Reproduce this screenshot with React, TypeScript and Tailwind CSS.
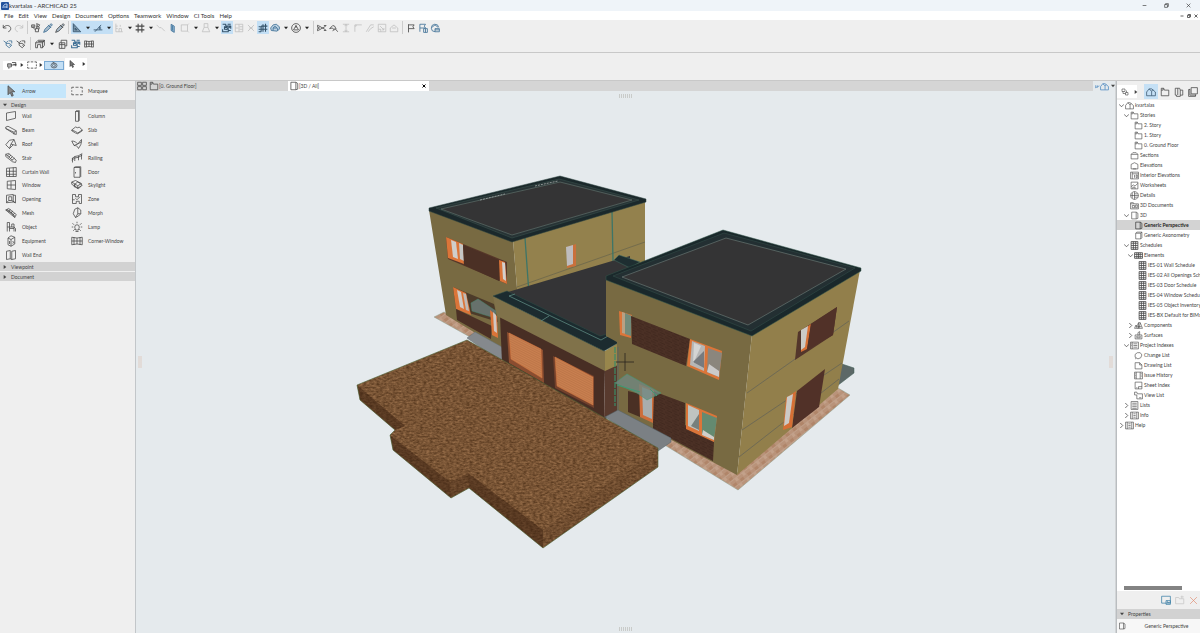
import React from "react";

/* Icon outlines on a 16 x 16 grid */
const paths: Record<string, string> = {
  arrow: "M4 1v12l3-3 2 5 2-1-2-5h4z",
  marquee: "M1 3h3M6 3h4M12 3h3v2M15 7v3M15 12v1h-3M10 13H6M4 13H1v-2M1 9V7M1 5V3",
  wall: "M2 4l12-2v9L2 14z",
  column: "M6 2l1-1h4v13l-1 1H6zM6 2h4v13M10 2l1-1",
  beam: "M1 4l3-1 11 6v5l-3-1L1 6zM1 6l11 5 3-2M12 11v3",
  slab: "M1 8l5-4 3 1 2-1 4 4-6 4-3-2zM1 8v1l5 3 3 1 6-4V8",
  roof: "M1 9l5-6 6-1 3 8-4-1-5 5zM6 14l2-6 4-6M8 8l3 1",
  shell: "M1 4c4 0 6 2 8 4l5-6v3l-1 4-3 5c-1-3-3-4-6-4zM9 8l-5 2M14 5l-5 3",
  stair: "M1 3l4-1 10 9-1 3-4-1L1 6zM1 3l9 8M3 5l3-2M5 7l3-3M7 9l3-3M9 11l4-3",
  railing: "M1 9l4-3 5-1 5-3M1 11l4-3 5-1 5-3M2 8v6M5 6v6M10 5v6M14 3v7",
  curtain: "M2 3l13-1v12H2zM6 3v11M11 2v12M2 7h13M2 11h13",
  door: "M4 2h8v13H4zM6 8v2M4 2l2-1h7v13l-1 1",
  window: "M3 3l11-1v12l-11-1zM8 3v10M3 8h11",
  skylight: "M1 4l5-2 8 4-5 3zM1 4v3l8 5 5-3M5 7l4-3 6 4-5 5-6-3zM9 9v4M5 7v3",
  opening: "M2 3l9-1v10l-9 1zM5 5h4v5H5zM11 3h3v10l-3-1M5 10l-3 3M9 10l5 3",
  zone: "M2 2h4v3h4V2h4v12h-3v-3H7v3H2zM6 7l2 2 4-4M2 9h3",
  mesh: "M1 4l4-2 10 8-2 4zM3 3l10 9M1 4c3 0 4 3 6 3s4 3 6 7M7 3L5 7M10 5L8 9M13 8l-3 3",
  morph: "M6 14L3 9l2-6 4-2 4 3v5l-3 3zM9 1v8l-3 5M9 9l4 0",
  object: "M3 14V2h3v6h6v6M3 8h3M6 8v6M6 10l6 0M12 8l2 2v4M9 8V4h3v4",
  lamp: "M5 8a3 3 0 1 1 6 0c0 2-1 2-1 4H6c0-2-1-2-1-4zM8 1v2M2 3l2 2M14 3l-2 2M1 8h2M13 8h2M3 13l2-2M13 13l-2-2M6 14h4",
  equipment: "M4 4l4-3 5 2v9l-5 3-4-2zM4 4l4 2 5-3M8 6v9M6 8v4M10 8l2 2M10 11l2-1",
  corner: "M1 3l7 1 7-1v10l-7-1-7 1zM8 4v8M4 3v10M12 3v10M1 8h14",
  wallend: "M2 3l5-1v11l-5 1zM9 3l5-1v11l-5 1zM7 13l2 1",
  home: "M1 14V8l4-5 4 4v7zM5 3h4l6 5v6H9M9 7l2-3",
  folder: "M2 2h4l1 3h7v9H2zM2 5h3V2",
  section: "M2 6l3-3h6l3 3v8H2zM2 6h12",
  elevation: "M2 6l6-3 6 3v8H2zM5 14h6",
  interior: "M1 2h14v12H1zM4 2v12M4 5h11M8 7v5M11 7h2v5h-2z",
  worksheet: "M2 2h12v12H2zM2 10l4-3 3 2 5-5M5 14v-3h4v3",
  details: "M8 1a7 7 0 1 0 .1 0M8 1v14M1 8h14M8 5h6M8 11h6M4 3v10",
  doc3d: "M1 3h5l1 2h8v9H1zM4 8h4v4H4zM10 7h3v5h-3zM1 5h6",
  box: "M3 2h8v12H3zM11 2l3 2v9l-3 1",
  axon: "M3 4l2-2h9v10l-2 2H3zM3 4h9v10M12 4l2-2",
  table: "M2 1h12v14H2zM6 1v14M10 1v14M2 4h12M2 8h12M2 12h12",
  elements: "M1 3h14v10H1zM1 6h14M1 10h14M5 3v10M8 3v10M11 3v10",
  components: "M1 13l2-5 3 0 2-5 3 0 4 10zM3 8l3 5M8 3v10M11 3l-2 10M4 10h9",
  surface: "M2 7h12v7H2zM7 7V3l3-2v6M5 9h6v3H5z",
  index: "M1 2h14v12H1zM4 2v12M6 5h7M6 8h7M6 11h7M2 5h1M2 8h1",
  change: "M6 3l5 0 3 4-2 5-5 2-5-3 0-5zM4 13l-2 1",
  drawing: "M2 3h8l4 4v7H2zM10 3v4h4",
  issue: "M1 2h14v12H1zM4 2v12M2 5h1M2 8h1M2 11h1M12 5h2M12 9h2M11 2v12",
  sheet: "M2 2h12v12H2zM8 10h6M8 10v4M4 12h2",
  view: "M1 2h4l1 3h9v9H5V7H1zM9 12h4",
  list: "M2 1h12v14H2zM4 4h8M4 7h8M4 10h8M4 13h8",
  info: "M1 2h14v12H1zM4 2v12M12 2v12M6 5h4M6 8h4M6 11h4",
  undo: "M2 3v5h5M2 8c3-6 12-5 12 1 0 3-2 4-4 5",
  redo: "M14 3v5H9M14 8C11 2 2 3 2 9c0 3 2 4 4 5",
  param: "M1 3h5v4H1zM3 7l4 4M7 9h5v5H7zM9 1l5 2-3 4zM9 4v5M13 6v4M2 5h3",
  dropper: "M1 15l2-5 6-6 3 3-6 6zM8 3l5 5M10 4l3-3 2 2-3 3",
  triangle: "M2 14V1l12 13zM5 11V8l3 3zM2 5h2M2 8h1",
  guide: "M1 11h14M3 14L13 3M9 8h4M11 5v6",
  ruler: "M3 1v13h11M3 5h3M3 9h3M8 14v-5h4v5M10 6V3",
  grid: "M5 1v14M11 1v14M1 5h14M1 11h14",
  wave: "M1 3l5 5 2-1 6 6",
  plane: "M5 2l5 3v10l-5-3zM7 4v8",
  square: "M2 3h10v10H2zM12 3l2-2M12 13l2 2",
  pin: "M5 1h6v6l3 7H2l3-7zM5 7h6",
  suspend: "M1 2h5v3h8v4M4 5v5h6v4H1v-4M9 2h5M6 11l7-5M10 12h4M4 7h5",
  split: "M2 2h12v12H2zM8 2v12M2 8h5M9 6h5M9 10h5",
  cross: "M3 3l10 10M13 3L3 13M5 8h6",
  marqueeHash: "M1 6h4v8M8 2v12M12 1v13M1 10h14M5 5h10M1 14h4",
  cloud: "M2 12l-1-4 4-5 5-1 5 4v4l-4 3zM5 12V8l3-3 4 4v3M5 8h6",
  circleTri: "M8 1a7 7 0 1 0 .1 0M8 4l4 7H4zM8 4v4",
  scissors: "M2 4l12 7M2 12l12-7M1 3v4h3M1 13V9h3M11 4h4M11 12h4",
  adjust: "M1 9l5-5 3 1 2 4-2 2-4-3zM9 8l5 6M8 10l-2 3",
  dim: "M3 2h10M3 14h10M8 2v12M6 5l2-3 2 3M6 11l2 3 2-3",
  fillet: "M3 14V3h11M5 3v2H3",
  chamfer: "M2 14L9 3h5M5 14l4-5 5-3",
  resize: "M2 2h12v12H2zM5 5l6 6M8 11h3V8M2 10h4v4",
  hood: "M2 14V8l6-5 6 5v6zM5 8h6",
  flag: "M4 15V2M4 3h9l-2 3 2 3H4",
  flagBox: "M3 14V2h9l-2 3 2 3H3M9 9h6v6H9zM12 9v6",
  roundHome: "M14 7a6 6 0 1 0-6 7M3 7l5-4 5 4M8 9h7v5H8zM8 11h7",
  team: "M1 3l4 3 3-3M5 6v4l5 4 4-4-4-3H5M9 3h5v4M10 10h2",
  layers: "M1 6l4-4h10l-3 4zM1 6v8h3V9h5v5h3V6M12 6l3-4v8l-3 4M5 4h8",
  tools: "M2 6h9v9H2zM5 6V2h9v9h-3M2 9h9M6 6v9",
  sheets: "M5 1h10v10H5zM3 4H1v11h11v-3M3 3v10h10",
  layout: "M2 2h7l1 3h4v8h-4v2H4v-2H2zM6 2v11M10 5v8",
  eye: "M2 9a6 5 0 1 1 12 0 6 5 0 1 1-12 0M8 6a3 3 0 1 0 .1 0M5 2l4 2M8 9h1",
  chooser: "M2 2h6v5H2zM9 9h5v5H9zM4 7v4h5M11 5v4",
  tiles: "M1 2h6v5H1zM9 2h6v5H9zM1 9h6v5H1zM9 9h6v5H9z",
  linked: "M1 4v8M1 12l13-6M7 4v8",
  method: "M1 6h6v5H1zM3 11v3M8 4h6v6M10 7h5M1 8h14",
  save: "M1 2h14v11H1zM8 9h7v6H8zM10 9v3h4",
  newFolder: "M1 4h5l1 2h7v8H1zM11 1v5M9 3h5",
  x: "M2 2l12 12M14 2L2 14",
  restore: "M2 5h9v9H2zM5 5V2h9v9h-3",
  minus: "M2 8h12",
};

type IconProps = { name: string; className?: string; fill?: string; thick?: number };
function Icon({ name, className = "size-[10px]", fill = "none", thick = 1.2 }: IconProps) {
  return (
    <svg viewBox="0 0 16 16" aria-hidden="true" className={`shrink-0 ${className}`} fill={fill} stroke="currentColor" strokeWidth={thick} strokeLinejoin="round">
      <path d={paths[name]} />
    </svg>
  );
}

function Caret({ right = false }: { right?: boolean }) {
  return (
    <svg viewBox="0 0 6 6" aria-hidden="true" className="size-[4px] shrink-0" fill="currentColor">
      <path d={right ? "M1 0l4 3-4 3z" : "M0 1h6L3 5z"} />
    </svg>
  );
}

const Sep = () => (
  <span className="flex w-[5px] justify-center">
    <span className="h-[13px] w-px bg-[#cccccc]" />
  </span>
);

const tone: Record<string, string> = {
  n: "text-[#484848]",
  d: "text-[#c0c0c0]",
  b: "text-[#3e6f95]",
  s: "bg-[#c3dff5] text-[#35536b]",
};

/* "|" is a separator, "v" a menu caret, otherwise icon name and tone */
type ToolbarItem = [string, string?];
const mainTools: ToolbarItem[] = [
  ["undo", "n"], ["redo", "d"], ["|"], ["param", "n"], ["dropper", "b"], ["dropper", "n"], ["|"],
  ["triangle", "s"], ["v", "s"], ["guide", "s"], ["v", "s"], ["ruler", "d"], ["v"], ["grid", "n"], ["v"],
  ["wave", "d"], ["plane", "b"], ["square", "d"], ["v"], ["pin", "d"], ["v"], ["suspend", "s"], ["split", "d"],
  ["cross", "d"], ["marqueeHash", "s"], ["cloud", "b"], ["v"], ["circleTri", "n"], ["v"], ["|"],
  ["scissors", "n"], ["adjust", "n"], ["dim", "d"], ["fillet", "d"], ["chamfer", "d"], ["resize", "d"], ["hood", "d"], ["|"],
  ["flag", "n"], ["flagBox", "b"], ["roundHome", "b"],
];
const viewTools: ToolbarItem[] = [
  ["team", "b"], ["team", "n"], ["|"], ["layers", "n"], ["v"], ["tools", "n"], ["suspend", "b"], ["corner", "n"],
];

const fillFor: Record<string, string> = { plane: "#8db4d3", triangle: "#7f99ad", dropper: "#a9bccb", cloud: "#b9cfe0" };

function ToolbarItems({ items }: { items: ToolbarItem[] }) {
  return (
    <>
      {items.map(([name, t = "n"], i) =>
        name === "|" ? (
          <Sep key={i} />
        ) : name === "v" ? (
          <button key={i} aria-label="More options" className={`flex h-[13px] w-[9px] items-center justify-center ${t === "s" ? "bg-[#c3dff5]" : ""} text-[#222222]`}>
            <Caret />
          </button>
        ) : (
          <button key={i} aria-label={name} className={`flex h-[13px] w-[12px] items-center justify-center ${tone[t]}`}>
            <Icon name={name} fill={fillFor[name]} thick={name === "suspend" || name === "grid" || name === "marqueeHash" ? 1.7 : 1.3} />
          </button>
        ),
      )}
    </>
  );
}

const menus = ["File", "Edit", "View", "Design", "Document", "Options", "Teamwork", "Window", "CI Tools", "Help"];

const designTools: [string, string][] = [
  ["wall", "Wall"], ["column", "Column"], ["beam", "Beam"], ["slab", "Slab"], ["roof", "Roof"], ["shell", "Shell"],
  ["stair", "Stair"], ["railing", "Railing"], ["curtain", "Curtain Wall"], ["door", "Door"], ["window", "Window"],
  ["skylight", "Skylight"], ["opening", "Opening"], ["zone", "Zone"], ["mesh", "Mesh"], ["morph", "Morph"],
  ["object", "Object"], ["lamp", "Lamp"], ["equipment", "Equipment"], ["corner", "Corner-Window"], ["wallend", "Wall End"],
];

function ToolButton({ icon, label, active = false }: { icon: string; label: string; active?: boolean }) {
  return (
    <button className={`flex items-center gap-[5px] pl-[5px] text-left ${active ? "bg-[#c5e6fb]" : ""}`}>
      <Icon name={icon} className="size-[12px]" fill={icon === "arrow" ? "#888888" : "none"} thick={1} />
      <span className="whitespace-nowrap">{label}</span>
    </button>
  );
}

function SectionHeader({ label, open = false }: { label: string; open?: boolean }) {
  return (
    <button className="flex h-[9px] w-full items-center gap-[4px] bg-[#d2d2d2] pl-[3px] text-left">
      <Caret right={!open} />
      {label}
    </button>
  );
}

function Toolbox() {
  return (
    <aside className="flex w-[136px] shrink-0 flex-col border-r border-[#c2c6c9] bg-[#efefef] text-[#444444]">
      <div className="grid h-[19px] grid-cols-2 pt-[3px] pr-[3px] pb-[2px]">
        <ToolButton icon="arrow" label="Arrow" active />
        <ToolButton icon="marquee" label="Marquee" />
      </div>
      <SectionHeader label="Design" open />
      <div className="grid h-[153px] auto-rows-fr grid-cols-2 pr-[3px]">
        {designTools.map(([icon, label]) => (
          <ToolButton key={label} icon={icon} label={label} />
        ))}
      </div>
      <div className="flex flex-col gap-px">
        <SectionHeader label="Viewpoint" />
        <SectionHeader label="Document" />
      </div>
    </aside>
  );
}

/* level, icon, label, disclosure state */
type Row = [number, string, string, string?];
const tree: Row[] = [
  [0, "home", "kvartalas", "open"],
  [1, "folder", "Stories", "open"],
  [2, "folder", "2. Story"],
  [2, "folder", "1. Story"],
  [2, "folder", "0. Ground Floor"],
  [1, "section", "Sections"],
  [1, "elevation", "Elevations"],
  [1, "interior", "Interior Elevations"],
  [1, "worksheet", "Worksheets"],
  [1, "details", "Details"],
  [1, "doc3d", "3D Documents"],
  [1, "box", "3D", "open"],
  [2, "box", "Generic Perspective"],
  [2, "axon", "Generic Axonometry"],
  [1, "table", "Schedules", "open"],
  [2, "elements", "Elements", "open"],
  [3, "table", "IES-01 Wall Schedule"],
  [3, "table", "IES-02 All Openings Sch"],
  [3, "table", "IES-03 Door Schedule"],
  [3, "table", "IES-04 Window Schedu"],
  [3, "table", "IES-05 Object Inventory"],
  [3, "table", "IES-BX Default for BIMx"],
  [2, "components", "Components", "closed"],
  [2, "surface", "Surfaces", "closed"],
  [1, "index", "Project Indexes", "open"],
  [2, "change", "Change List"],
  [2, "drawing", "Drawing List"],
  [2, "issue", "Issue History"],
  [2, "sheet", "Sheet Index"],
  [2, "view", "View List"],
  [1, "list", "Lists", "closed"],
  [1, "info", "Info", "closed"],
  [0, "info", "Help", "closed"],
];
const indent = ["pl-[2px]", "pl-[7px]", "pl-[11px]", "pl-[15px]"];

function Navigator() {
  return (
    <aside className="flex w-[84px] shrink-0 flex-col overflow-hidden border-l border-[#b9bdc0] bg-[#efefef] text-[#444444]">
      <div className="flex h-[19px] shrink-0 items-center pt-[2px]">
        <button aria-label="Project chooser" className="flex h-[13px] w-[20px] items-center gap-[5px] bg-white pl-[4px]">
          <Icon name="chooser" className="size-[8px]" />
          <Caret right />
        </button>
        <div className="ml-[7px] flex shrink-0">
          {["home", "folder", "layout", "sheets"].map((n, i) => (
            <button key={n} aria-label={n} className={`flex h-[15px] w-[14px] items-center justify-center ${i === 0 ? "bg-[#c5e0f5] text-[#35536b]" : ""}`}>
              <Icon name={n} />
            </button>
          ))}
        </div>
      </div>
      <ul className="min-h-0 flex-1 overflow-hidden bg-white">
        {tree.map(([level, icon, label, state], i) => {
          const current = label === "Generic Perspective";
          return (
            <li key={i} className={current ? "bg-[#d3d3d3] font-bold text-[#222222]" : ""}>
              <button className={`flex h-[10px] w-full items-center whitespace-nowrap ${indent[level]}`}>
                <span className="flex w-[6px] shrink-0 items-center">
                  {state && (
                    <svg viewBox="0 0 6 6" aria-hidden="true" className="size-[5px]" fill="none" stroke="currentColor" strokeWidth="0.9">
                      <path d={state === "open" ? "M0 1.500l3 3 3-3" : "M1.500 0l3 3-3 3"} />
                    </svg>
                  )}
                </span>
                <Icon name={icon} className="size-[9px]" thick={icon === "table" || icon === "elements" ? 1.4 : 1.1} />
                <span className="pl-px">{label}</span>
              </button>
            </li>
          );
        })}
      </ul>
      <div className="flex h-[24px] shrink-0 flex-col">
        <div className="h-[6px] bg-white px-[7px] pt-px">
          <div className="h-[4px] w-[58px] bg-[#838383]" />
        </div>
        <div className="flex flex-1 items-center justify-end gap-[4px] pr-[2px]">
          <button aria-label="Save view" className="text-[#3b7fa6]"><Icon name="save" /></button>
          <button aria-label="New folder" className="text-[#c6c6c6]"><Icon name="newFolder" /></button>
          <button aria-label="Delete" className="text-[#e08a70]"><Icon name="x" className="size-[9px]" /></button>
        </div>
      </div>
      <button className="flex h-[10px] shrink-0 items-center gap-[4px] bg-[#d2d2d2] pl-[3px] text-left">
        <Caret />
        Properties
      </button>
      <div className="flex h-[14px] shrink-0 items-center bg-[#f7f7f7] pl-px">
        <Icon name="box" className="size-[8px]" />
        <span className="flex-1 pl-[7px] text-center">Generic Perspective</span>
      </div>
    </aside>
  );
}

const P = ({ p, f, s, w = 0.5 }: { p: string; f: string; s?: string; w?: number }) => (
  <polygon points={p} fill={f} stroke={s} strokeWidth={w} />
);

function House() {
  return (
    <svg viewBox="136 91 979 542" preserveAspectRatio="xMidYMid slice" className="h-full w-full" role="img" aria-label="Perspective view of the house">
      <defs>
        <filter id="soil" x="0" y="0" width="1" height="1" colorInterpolationFilters="sRGB">
          <feTurbulence type="fractalNoise" baseFrequency="0.3 0.55" numOctaves="2" seed="4" result="n" />
          <feColorMatrix in="n" type="matrix" values="0.360 0 0 0 0.290  0.300 0 0 0 0.178  0.240 0 0 0 0.085  0 0 0 0 1" result="c" />
          <feComposite in="c" in2="SourceGraphic" operator="in" />
        </filter>
        <pattern id="pave" width="9" height="7" patternUnits="userSpaceOnUse" patternTransform="rotate(-38)">
          <rect width="9" height="7" fill="#b9937a" />
          <rect width="4" height="3" fill="#b08569" />
          <rect x="5" y="4" width="3" height="3" fill="#c3a18a" />
          <path d="M0 3.500h9" stroke="#c9b3a2" strokeWidth=".4" />
        </pattern>
        <pattern id="slats" width="4" height="2" patternUnits="userSpaceOnUse" patternTransform="rotate(27)">
          <rect width="4" height="2" fill="#c98050" />
          <path d="M0 .5h4" stroke="#b06c42" strokeWidth=".5" />
        </pattern>
        <pattern id="wood" width="7" height="5" patternUnits="userSpaceOnUse" patternTransform="skewY(24)">
          <rect width="7" height="5" fill="#4b3025" />
          <path d="M0 1h5M2 3.500h5" stroke="#3f281e" strokeWidth=".8" />
        </pattern>
      </defs>
      <rect x="136" y="91" width="979" height="542" fill="#e5eaed" />

      {/* paving and side terrace */}
      <P p="434,317 444,312 480,333 470,337" f="url(#pave)" s="#8fa08f" />
      <P p="842,364 854,368 854,373 837,386" f="#5c6867" s="#3f5d55" />
      <P p="663,444 672,438 737,473 838,388 850,395 738,490" f="url(#pave)" s="#8fa08f" />

      {/* left block */}
      <P p="429,210 513,240 518,300 505,355 490,342 446,315" f="#786a42" />
      <P p="513,240 645,199 645,264 518,300" f="#93814d" />
      <path d="M517 287L645 242" stroke="#66634c" strokeWidth=".7" />
      <path d="M525 238l4 56M612 211l1 50" stroke="#3d7568" strokeWidth="1.300" />
      <P p="446,237 507,262 507,284 448,259" f="#563729" />
      <P p="446,237 463,244 464,264 448,258" f="#db7539" />
      <P p="451,240 456,242 458,259 453,257" f="#d0cecb" />
      <P p="459,243 463,245 464,261 460,259" f="#c6c6c4" />
      <P p="463,245 499,260 499,281 464,265" f="#4b3025" />
      <P p="499,260 505,262 507,284 500,281" f="#db7539" />
      <P p="502,262 505,263 506,281 503,279" f="#d3d1cf" />
      <P p="567,247 576,244 576,266 567,268" f="#c9703c" />
      <P p="566,247 573,245 573,264 567,266" f="#bebcbe" />
      <P p="453,287 494,304 498,322 456,309" f="#4c3b2a" />
      <P p="453,287 466,293 471,315 456,309" f="#db7539" />
      <P p="457,290 461,292 464,309 460,307" f="#d0cac5" />
      <P p="463,293 466,294 469,311 466,310" f="#c0bab5" />
      <P p="456,309 492,326 491,339 457,320" f="#4b3025" />
      <P p="471,303 478,299 496,311 495,318 472,311" f="#67716c" s="#4a8a72" />
      <P p="490,310 497,316 498,338 492,335" f="#db7539" />
      <P p="493,312 496,315 497,333 494,331" f="#d0c8c3" />
      <P p="467,338 475,332 502,347 503,363" f="#85898d" s="#627276" />
      <P p="429,208 560,176 646,199 646,202 512,242 429,211" f="#1b282b" s="#2c4540" />
      <P p="436,208 559,179 639,200 512,238" f="#283335" s="#3d5751" />
      <P p="441,209 560,182 632,200 512,235" f="#343435" s="#71867f" />
      <path d="M480 200l25-6M535 186l23-5" stroke="#8f9795" strokeWidth="1" strokeDasharray="2 1" />

      {/* garage */}
      <P p="500,315 605,369 604,420 502,363" f="#482e24" />
      <P p="605,370 618,363 618,411 604,420" f="#583a2e" />
      <P p="493,296 605,351 605,371 497,316" f="#80724a" />
      <P p="605,351 618,343 618,365 605,371" f="#98864c" />
      <P p="505,293 612,261 630,256 630,346 600,340" f="#343436" />
      <P p="614,260 619,255 640,262 630,268" f="#1e2e31" s="#447064" />
      <P p="493,296 507,291 600,336 607,334 618,343 604,351" f="#1c2b2f" s="#2d4f48" />
      <path d="M509 296l92 44 7-4M509 296l6-2M541 321l8-5" stroke="#64938a" strokeWidth=".7" fill="none" />
      <P p="507,332 543,350 544,383 509,363" f="#8a4d30" />
      <P p="509,333 541,349 542,378 511,359" f="url(#slats)" s="#d8773c" />
      <P p="553,356 594,376 594,408 555,388" f="#73412c" />
      <P p="555,357 593,377 593,405 557,386" f="url(#slats)" s="#d8773c" />

      {/* right block, courtyard side */}
      <P p="606,277 752,334 737,475 617,411 617,342 606,336" f="#786a42" />
      <P p="752,334 860,270 838,389 737,475" f="#927f4b" />
      <path d="M747 393L849 321M742 430L842 363M739 457L839 379" stroke="#666557" strokeWidth=".8" fill="none" />
      <path d="M615 347v59" stroke="#3a8c66" strokeWidth="1.200" strokeDasharray="6 1" />
      <path d="M618 347v63" stroke="#55636c" strokeWidth=".8" />
      <P p="619,311 632,315 631,338 620,335" f="#db7539" />
      <P p="622,312 625,313 626,334 622,333" f="#b9a083" />
      <P p="625,313 632,316 631,336 625,334" f="#738b7a" />
      <P p="631,316 690,339 686,366 632,344" f="url(#wood)" />
      <P p="690,339 722,351 719,380 687,366" f="#db7539" />
      <P p="692,341 705,346 704,371 690,365" f="#b6b6b6" />
      <P p="708,348 722,353 719,377 707,372" f="#8b867d" />
      <P p="694,343 701,346 693,364" f="#d4d4d3" />
      <P p="709,364 719,371 719,377 707,372" f="#cbcaca" />
      <P p="695,360 704,351 704,368 693,362" f="#777a7e" />
      <P p="628,391 640,394 640,417 628,412" f="#4a3024" />
      <P p="653,391 685,403 685,425 714,442 713,461 653,429" f="url(#wood)" />
      <P p="639,384 654,390 653,423 640,417" f="#cd6d3a" />
      <P p="642,387 652,391 652,419 643,415" f="#a9adad" />
      <P p="686,403 717,416 714,442 686,429" f="#db7539" />
      <P p="688,405 699,410 699,431 688,426" f="#bfc4c0" />
      <P p="702,412 717,418 714,440 702,434" f="#648a70" />
      <P p="691,426 699,414 699,430" f="#77807c" />
      <P p="703,430 714,437 714,440 702,435" f="#d0cec9" />
      <P p="615,383 627,374 661,393 647,400 637,393" f="#718780cc" s="#3f9a73" />
      <path d="M617 385l23 7M650 389l7 7" stroke="#3f9a73" strokeWidth="1" />

      {/* right block, garden side */}
      <P p="798,332 837,307 833,335 795,360" f="#53362b" />
      <P p="801,331 811,324 807,349 801,352" f="#d66f35" />
      <P p="801,330 808,326 805,347 801,350" f="#cccac6" />
      <P p="811,324 837,307 833,335 807,350" f="#513128" />
      <P p="797,391 825,369 819,407 792,428" f="#513128" />
      <P p="786,398 796,391 792,427 783,430" f="#d66f35" />
      <P p="787,397 793,394 789,423 784,426" f="#cccac6" />
      <P p="606,276 723,230 861,268 861,271 752,336 606,280" f="#1a282b" s="#35584c" />
      <P p="613,276 724,233 855,268 751,331" f="#232f32" s="#36534c" />
      <P p="622,277 726,238 846,269 748,325" f="#343435" s="#7f918b" />
      <P p="605,417 618,410 671,438 671,442 658,451" f="#7b8084" s="#52636a" />

      {/* excavated terrain */}
      <g filter="url(#soil)">
        <P p="357,385 467,340 658,448 658,467 543,548 469,488 451,498 393,450 390,435 395,430 360,400" f="#7b5435" />
      </g>
      <P p="357,385 405,426 395,430 360,400" f="#3a200f80" />
      <P p="390,435 450,482 451,498 393,450" f="#3a200f80" />
      <P p="468,473 543,530 543,548 469,488" f="#3a200f80" />
      <P p="450,482 468,473 469,488 451,498" f="#3a200f50" />
      <P p="543,530 658,448 658,467 543,548" f="#3a200f20" />
      <path d="M357 385l110-45 191 108v19l-115 81-74-60-18 10-58-48-3-15 5-5-35-30z" fill="none" stroke="#4e6337" strokeWidth=".6" />
      <path d="M616 362h18M625 353v18" stroke="#29251e" strokeWidth=".8" />

      {/* palette grips */}
      <path d="M619 96h13M619 629h13" stroke="#c9cbc9" strokeWidth="4" strokeDasharray="1 1" />
      <path d="M138 357h4M138 359h4M138 361h4M138 363h4M138 365h4M138 367h4M1109 357h4M1109 359h4M1109 361h4M1109 363h4M1109 365h4M1109 367h4" stroke="#dfcdc3" strokeWidth="1" />
    </svg>
  );
}

function Viewport() {
  return (
    <main className="flex min-w-0 flex-1 flex-col border-r border-[#d2d5d7]">
      <div className="flex h-[10px] shrink-0 items-center bg-[#d5d5d5] text-[#444444]">
        <button aria-label="Tab overview" className="flex w-[12px] justify-center"><Icon name="tiles" /></button>
        <button className="flex h-full w-[140px] items-center pl-px"><Icon name="folder" /><span>[0. Ground Floor]</span></button>
        <div className="flex h-full w-[141px] items-center justify-between bg-white pr-[3px] pl-px">
          <button className="flex items-center"><Icon name="box" /><span>[3D / All]</span></button>
          <button aria-label="Close tab" className="text-black"><Icon name="x" className="size-[4px]" thick={4} /></button>
        </div>
        <div className="flex-1" />
        <div className="flex h-full w-[22px] items-center gap-[2px] bg-[#e5eaed] pl-[2px] text-[#5b92c4]">
          <button aria-label="3D view options" className="flex items-center">
            <Icon name="linked" className="size-[5px]" thick={2.5} />
            <Icon name="home" className="size-[9px]" thick={1.5} />
          </button>
          <span className="text-[#444444]"><Caret /></span>
        </div>
      </div>
      <div className="min-h-0 flex-1 overflow-hidden">
        <House />
      </div>
    </main>
  );
}

export default function App() {
  return (
    <div className="flex h-screen flex-col overflow-hidden bg-[#efefef] font-[Lato,'Open_Sans',sans-serif] text-[5px] leading-[8px] text-[#333333]">
      <header className="flex h-[11px] shrink-0 items-center bg-[#eff4f9] px-px text-[6px]">
        <svg viewBox="0 0 8 8" aria-hidden="true" className="size-[8px]">
          <rect width="8" height="8" rx="1" fill="#24539d" />
          <path d="M2 6c0-4 3-4 4-4v4M3 5h3" fill="none" stroke="#d4e4f8" strokeWidth=".9" />
        </svg>
        <h1>kvartalas - ARCHICAD 25</h1>
        <div className="ml-auto flex gap-[17px] pr-[8px]">
          <button aria-label="Minimize"><Icon name="minus" className="size-[5px]" thick={2} /></button>
          <button aria-label="Restore"><Icon name="restore" className="size-[5px]" thick={2} /></button>
          <button aria-label="Close"><Icon name="x" className="size-[5px]" thick={2} /></button>
        </div>
      </header>
      <nav className="flex h-[9px] shrink-0 items-center gap-[5px] bg-white pr-[2px] pl-[4px] text-[6px]">
        {menus.map((m) => (
          <button key={m}>{m}</button>
        ))}
        <div className="ml-auto flex gap-[3px]">
          <button aria-label="Minimize window"><Icon name="minus" className="size-[4px]" thick={3} /></button>
          <button aria-label="Restore window"><Icon name="restore" className="size-[4px]" thick={3} /></button>
          <button aria-label="Close window"><Icon name="x" className="size-[4px]" thick={3} /></button>
        </div>
      </nav>
      <div className="flex h-[33px] shrink-0 flex-col gap-[3px] border-b border-[#c8c8c8] pt-px pl-px">
        <div className="flex items-center"><ToolbarItems items={mainTools} /></div>
        <div className="flex items-center gap-px pl-px"><ToolbarItems items={viewTools} /></div>
      </div>
      <div className="flex h-[28px] shrink-0 items-center border-b border-[#c8c8c8] pb-[3px] pl-[3px]">
        <button aria-label="Selection method" className="flex h-[9px] w-[22px] items-center justify-center gap-[3px] bg-white pl-[2px]"><Icon name="method" /><Caret right /></button>
        <button aria-label="Marquee method" className="flex h-[9px] w-[19px] items-center justify-center gap-[2px] bg-white"><Icon name="marquee" /><Caret right /></button>
        <button aria-label="Quick selection" className="flex h-[9px] w-[20px] items-center justify-center border border-[#79a9d3] bg-[#c3dff5]"><Icon name="eye" className="size-[8px]" /></button>
        <button aria-label="Arrow tool" className="mb-[3px] ml-px flex h-[12px] w-[22px] items-center justify-center gap-[6px] bg-white pl-[2px]"><Icon name="arrow" className="size-[8px]" fill="#777777" /><Caret right /></button>
      </div>
      <div className="flex min-h-0 flex-1">
        <Toolbox />
        <Viewport />
        <Navigator />
      </div>
    </div>
  );
}
